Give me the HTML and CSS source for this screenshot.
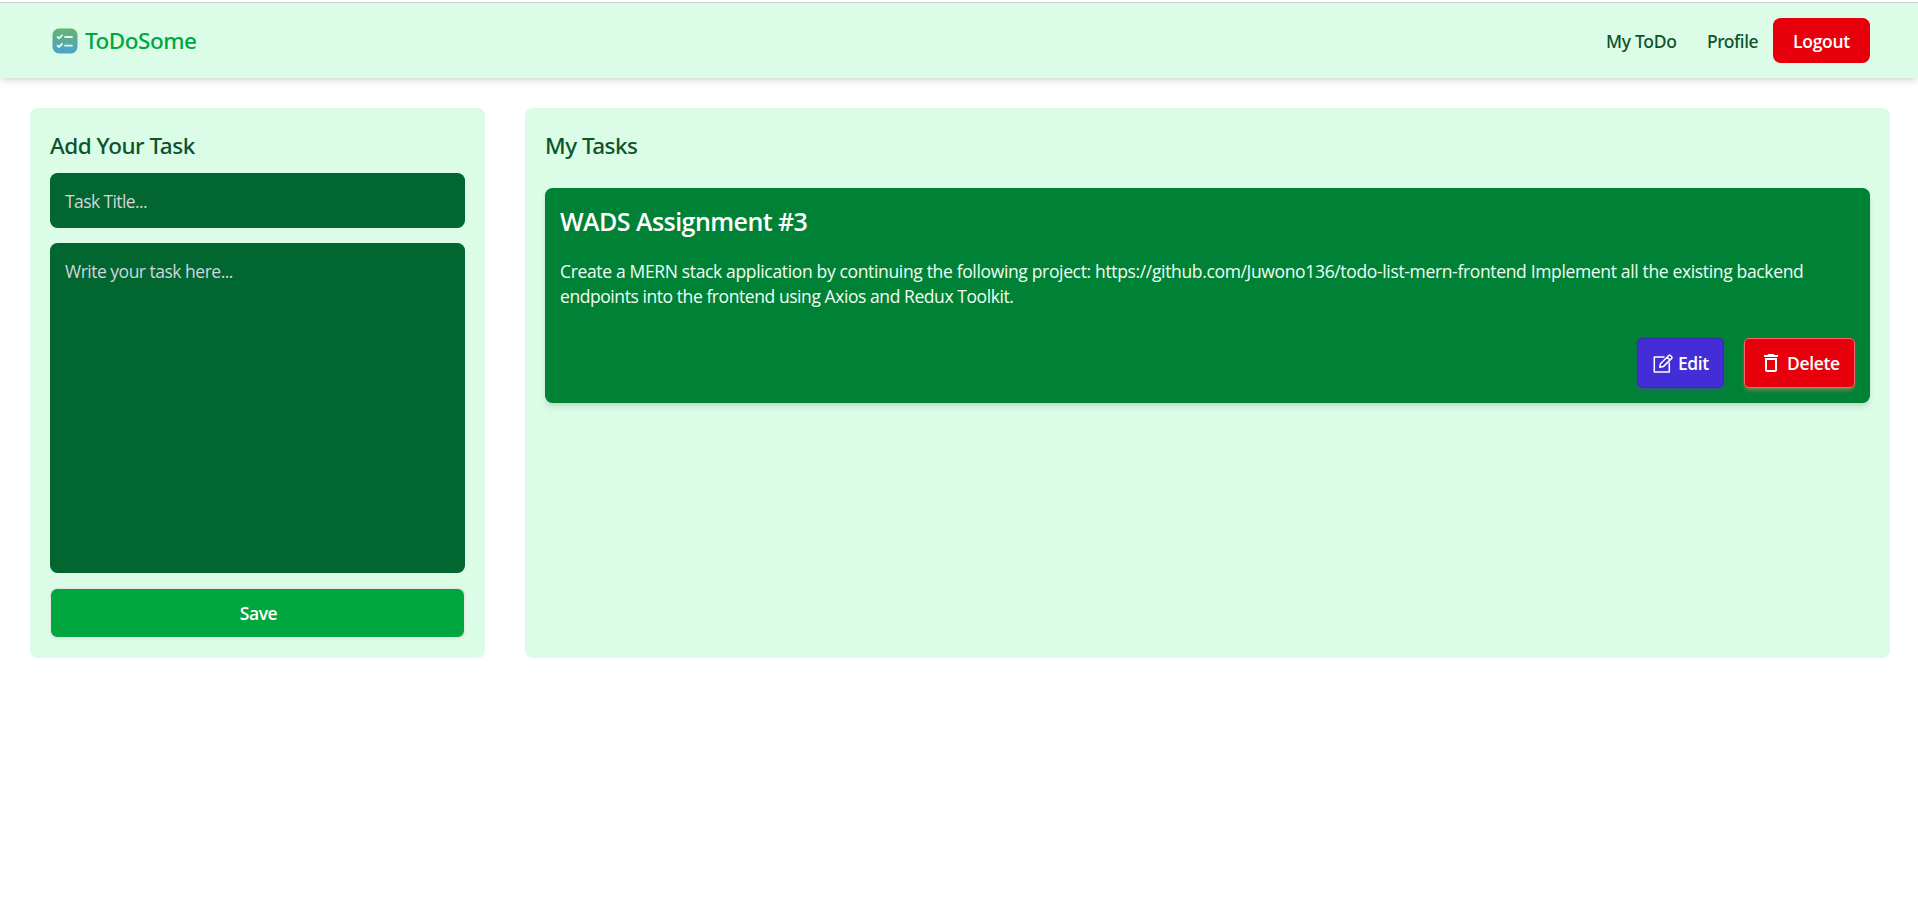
FILE: index.html
```html
<!DOCTYPE html>
<html lang="en">
<head>
<meta charset="utf-8">
<title>ToDoSome</title>
<link rel="stylesheet" href="styles.css">
</head>
<body>
<header class="navbar">
  <a class="brand">
    <svg class="brand-icon" viewBox="0 0 26 26">
      <defs><linearGradient id="brand-fill" x1="0" y1="0" x2="0" y2="1"><stop offset="0" stop-color="#67b26f"/><stop offset="1" stop-color="#4ca2cd"/></linearGradient></defs>
      <rect x=".5" y=".5" width="25" height="25" rx="6.5" fill="url(#brand-fill)"/>
      <path d="M5.5 9l1.5 1.300 3-3M13 9h7M5.500 17.700l1.500 1.300 3-3M13 17.700h7" fill="none" stroke="#dcfce7" stroke-width="1.8" stroke-linecap="round" stroke-linejoin="round"/>
    </svg>
    <span class="brand-name">ToDoSome</span>
  </a>
  <nav class="nav">
    <a class="nav-link nav-todo">My ToDo</a>
    <a class="nav-link nav-profile">Profile</a>
    <button class="logout">Logout</button>
  </nav>
</header>
<main class="board">
  <section class="panel">
    <h2 class="heading heading-add">Add Your Task</h2>
    <input class="field field-title" type="text" placeholder="Task Title...">
    <textarea class="field field-body" placeholder="Write your task here..."></textarea>
    <button class="save">Save</button>
  </section>
  <section class="panel">
    <h2 class="heading heading-tasks">My Tasks</h2>
    <article class="card">
      <h3 class="card-title">WADS Assignment #3</h3>
      <p class="card-text">Create a MERN stack application by continuing the following project: https://github.com/Juwono136/todo-list-mern-frontend Implement all the existing backend <span class="card-text-end">endpoints into the frontend using Axios and Redux Toolkit.</span></p>
      <div class="actions">
        <button class="btn edit">
          <svg class="icon-edit" viewBox="0 0 21 19" fill="none" stroke="currentColor" stroke-width="1.5" stroke-linejoin="round" stroke-linecap="round">
            <path d="M11 3H1.3v15h15V9"/>
            <path d="M6.8 13.2l.7-3.5 8.3-8.2q.8-.8 1.6 0l1.300 1.300q.8.8 0 1.600l-8.400 8.200zM14.200 3.200l2.800 2.800"/>
          </svg>
          <span class="edit-label">Edit</span>
        </button>
        <button class="btn delete">
          <svg class="icon-delete" viewBox="0 0 24 24" fill="currentColor"><path d="M6 19c0 1.100.9 2 2 2h8c1.100 0 2-.9 2-2V7H6v12zM8 9h8v10H8V9zm7.500-5l-1-1h-5l-1 1H5v2h14V4z"/></svg>
          <span class="delete-label">Delete</span>
        </button>
      </div>
    </article>
  </section>
</main>
</body>
</html>
```
FILE: styles.css
```css
* {
  box-sizing: border-box;
  margin: 0;
}

body {
  padding-top: 2px;
  background: #fff;
  color: #0d542b;
  font-family: "Open Sans", "Noto Sans", sans-serif;
  font-size: 17.5px;
  line-height: 25px;
}

button {
  font: inherit;
  font-weight: 600;
  color: #fff;
  border: 0;
  padding: 0;
}

.navbar {
  display: flex;
  justify-content: space-between;
  align-items: center;
  height: 76px;
  padding: 0 48px 0 52px;
  border-top: 1px solid #ccc;
  background: #dbfce7;
  box-shadow: 0 5px 7.5px -1.25px rgba(0, 0, 0, .1), 0 2.5px 5px -2.5px rgba(0, 0, 0, .1);
}

.brand {
  display: flex;
  align-items: center;
  gap: 7px;
}

.brand-icon {
  width: 26px;
  height: 26px;
}

.brand-name {
  color: #00a63e;
  font-family: "Noto Sans", sans-serif;
  font-size: 22.5px;
  font-weight: 500;
  letter-spacing: -.5px;
}

.nav {
  display: flex;
  align-items: center;
}

.nav-link {
  font-family: "Noto Sans", sans-serif;
  font-weight: 500;
  padding-top: 1px;
}

.nav-todo {
  width: 72px;
  letter-spacing: -.3px;
  margin-right: 29px;
  white-space: nowrap;
}

.nav-profile {
  width: 53px;
  letter-spacing: -.45px;
  margin-right: 13px;
}

.logout {
  width: 97px;
  height: 45px;
  padding-top: 2px;
  border-radius: 7.5px;
  background: #e7000b;
  letter-spacing: -.3px;
}

.board {
  display: grid;
  grid-template-columns: 455px 1fr;
  gap: 40px;
  padding: 30px 28px 0 30px;
}

.panel {
  display: flex;
  flex-direction: column;
  height: 549.5px;
  padding: 20px;
  border-radius: 7.5px;
  background: #dbfce7;
}

.heading {
  font-family: "Noto Sans", sans-serif;
  font-size: 22.5px;
  font-weight: 500;
  line-height: 35px;
}

.heading-add {
  letter-spacing: -.47px;
  margin-bottom: 10px;
}

.heading-tasks {
  letter-spacing: -.5px;
  margin-bottom: 25px;
}

.field {
  display: block;
  width: 100%;
  border: 0;
  border-radius: 7.5px;
  padding: 15px;
  background: #016630;
  color: #fff;
  font: inherit;
  resize: none;
  margin-bottom: 15px;
}

.field::placeholder {
  color: #d1d5dc;
}

.field-title {
  height: 55px;
  letter-spacing: -.6px;
}

.field-body {
  height: 330px;
  padding-top: 16px;
  letter-spacing: -.5px;
}

.save {
  height: 49.5px;
  padding: 2px 0 0 2px;
  border: 1px solid #e2e9e4;
  border-radius: 7.5px;
  background: #00a63e;
  box-shadow: 0 1px 3px rgba(220, 200, 215, .3);
  letter-spacing: -.45px;
}

.card {
  padding: 15px;
  border-radius: 7.5px;
  background: #008236;
  color: #fff;
  box-shadow: 0 5px 7.5px -1.25px rgba(0, 0, 0, .1), 0 2.5px 5px -2.5px rgba(0, 0, 0, .1);
}

.card-title {
  font-size: 25px;
  font-weight: 600;
  line-height: 36px;
  letter-spacing: -.55px;
  margin-bottom: 20px;
}

.card-text {
  color: #f0fdf4;
  letter-spacing: -.345px;
  margin-bottom: 29px;
}

.card-text-end {
  display: block;
  letter-spacing: -.43px;
}

.actions {
  display: flex;
  justify-content: flex-end;
  gap: 20px;
}

.btn {
  display: flex;
  align-items: center;
  height: 50px;
  border: 1px solid;
  border-radius: 5px;
}

.edit {
  width: 87px;
  padding-left: 15px;
  gap: 4px;
  border-color: #372aac;
  background: #432dd7;
  box-shadow: 0 3px 4px -1px rgba(90, 70, 215, .5);
}

.delete {
  width: 111px;
  padding-left: 14px;
  gap: 4px;
  border-color: #ff6467;
  background: #e7000b;
  box-shadow: 0 3px 4px -1px rgba(255, 130, 130, .5);
}

.icon-edit {
  width: 21px;
  height: 19px;
}

.icon-delete {
  width: 24px;
  height: 24px;
}

.edit-label {
  letter-spacing: -.4px;
}

.delete-label {
  letter-spacing: -.35px;
}
```
